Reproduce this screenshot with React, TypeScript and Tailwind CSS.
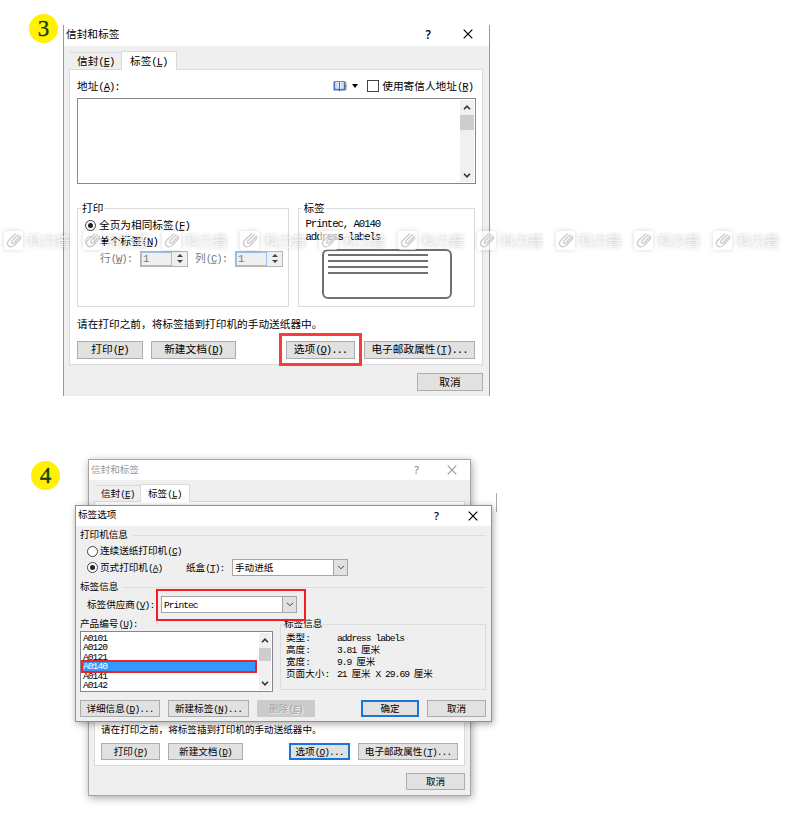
import React from 'react';
import clsx from 'clsx';

// Splits a label into CJK and Latin runs, "&X" marks the access key
const Label: React.FC<{ text: string; className?: string }> = ({ text, className }) => {
  const runs = text.match(/&.|[\x20-\x25\x27-\x7e]+|[^\x20-\x7e]+/g) ?? [];
  return (
    <span className={clsx('translate-y-[0.8px] whitespace-pre leading-none', className)}>
      {runs.map((run, i) => {
        if (run[0] === '&') {
          return (
            <span key={i} className="tracking-[-0.1em] underline underline-offset-1">
              {run.slice(1)}
            </span>
          );
        }
        const latin = /^[\x20-\x7e]/.test(run);
        return (
          <span key={i} className={latin ? 'tracking-[-0.1em]' : undefined}>
            {run}
          </span>
        );
      })}
    </span>
  );
};

const CloseIcon = () => (
  <svg className="h-[10px] w-[10px]" viewBox="0 0 10 10" stroke="currentColor" strokeWidth="1.2" fill="none">
    <path d="M0.7 0.7 9.3 9.3M9.3 0.7 0.7 9.3" />
  </svg>
);

const Chevron: React.FC<{ up?: boolean; className?: string }> = ({ up, className }) => (
  <svg className={clsx('h-[5px] w-[8px]', className)} viewBox="0 0 8 5" stroke="currentColor" fill="none">
    <path d={up ? 'M1 4.2 4 1.2 7 4.2' : 'M1 0.8 4 3.8 7 0.8'} />
  </svg>
);

const BookIcon = () => (
  <svg className="h-[12px] w-[14px]" viewBox="0 0 14 12">
    <path d="M0.5 1.5v9h4.8l1.2.8 1.2-.8h4.8v-9z" fill="#3f73c4" />
    <path d="M1.8 1.5h3.6l1.1.7v7.8l-1.1-.8H1.8zM11.2 1.5H7.6l-1.1.7v7.8l1.1-.8h3.6z" fill="#eaf3ff" stroke="#2f5fae" strokeWidth="0.7" />
    <path d="M3 3.5h2M3 5.2h2M3 7h2M8 3.5h2M8 5.2h2M8 7h2" stroke="#9cb9e6" strokeWidth="0.7" />
    <path d="M12.2 2h1.3v2.500h-1.300z" fill="#e8a33a" />
    <path d="M12.2 4.7h1.3v2.300h-1.300z" fill="#c8453a" />
    <path d="M12.2 7.2h1.3v2.500h-1.300z" fill="#4f9a54" />
  </svg>
);

const Radio: React.FC<{ checked?: boolean }> = ({ checked }) => (
  <span className="flex h-[11px] w-[11px] shrink-0 items-center justify-center rounded-full border border-[#444] bg-white">
    {checked && <span className="h-[5px] w-[5px] rounded-full bg-[#222]" />}
  </span>
);

const Button: React.FC<{ text: string; className?: string; primary?: boolean; disabled?: boolean }> = ({
  text,
  className,
  primary,
  disabled,
}) => (
  <button
    className={clsx(
      'flex shrink-0 items-center justify-center',
      primary
        ? 'border-2 border-[#1b75d8] bg-[#e1e1e1]'
        : disabled
          ? 'bg-[#cbcbcb] text-[#a2a2a2] [text-shadow:1px_1px_0_#f4f4f4]'
          : 'border border-[#adadad] bg-[#e1e1e1]',
      className,
    )}
  >
    <Label text={text} />
  </button>
);

const Spinner = () => (
  <span className="flex h-[16px] w-[48px] border border-[#b4b4b4]">
    <span className="flex w-[31px] items-center border border-[#9cc3ea] bg-[#efefef] pl-px">
      <Label text="1" />
    </span>
    <span className="flex flex-1 flex-col items-center justify-center gap-[3px] bg-[#efefef]">
      <span className="border-x-[3px] border-b-[3px] border-x-transparent border-b-[#444]" />
      <span className="border-x-[3px] border-t-[3px] border-x-transparent border-t-[#444]" />
    </span>
  </span>
);

const Select: React.FC<{ value: string; className?: string }> = ({ value, className }) => (
  <span className={clsx('flex h-[17px] border border-[#a5a5a5] bg-white', className)}>
    <span className="flex flex-1 items-center pl-[2px]">
      <Label text={value} />
    </span>
    <span className="flex w-[14px] items-center justify-center border-l border-[#a5a5a5] bg-[#e1e1e1] text-[#444]">
      <Chevron />
    </span>
  </span>
);

const Scrollbar: React.FC<{ className?: string; thumb: string }> = ({ className, thumb }) => (
  <div className={clsx('flex flex-col items-center bg-[#f0f0f0] text-[#333]', className)}>
    <span className="flex h-[15px] items-center">
      <Chevron up className="[stroke-width:1.6]" />
    </span>
    <span className={clsx('w-full bg-[#cdcdcd]', thumb)} />
    <span className="mt-auto flex h-[14px] items-center">
      <Chevron className="[stroke-width:1.6]" />
    </span>
  </div>
);

const SectionTitle: React.FC<{ text: string }> = ({ text }) => (
  <div className="flex h-[12px] items-center gap-[5px]">
    <Label text={text} />
    <span className="h-px flex-1 bg-[#dcdcdc]" />
  </div>
);

const StepBadge: React.FC<{ value: number; className: string }> = ({ value, className }) => (
  <div
    className={clsx(
      'absolute flex h-[29px] w-[29px] items-center justify-center rounded-full bg-[#fff100] font-["Liberation_Serif",serif] text-[23px] leading-none text-[#143d14] [-webkit-text-stroke:0.3px_#143d14]',
      className,
    )}
  >
    {value}
  </div>
);

const EnvelopesDialog = () => (
  <div className="absolute left-[63px] top-[25px] h-[371px] w-[427px] border-x border-[#e87474] bg-[#efefef] text-[10.68px]">
    <div className="flex h-[21px] items-center bg-white pl-[2px] pr-[16px]">
      <Label text="信封和标签" className="flex-1 pb-[2px]" />
      <span className="mr-[32px] pb-px font-['Open_Sans',sans-serif] text-[12px] font-semibold leading-none">?</span>
      <span className="pb-[3px]">
        <CloseIcon />
      </span>
    </div>
    <div className="flex h-[23px] items-end pl-[6px]">
      <div className="flex h-[17px] w-[51px] items-center border-t border-[#dadada] pl-[7px] pt-px">
        <Label text="信封(&E)" />
      </div>
      <div className="z-10 -mb-px flex h-[19px] w-[56px] items-center border border-b-0 border-[#dadada] bg-white pl-[8px]">
        <Label text="标签(&L)" />
      </div>
    </div>
    <div className="ml-[5px] h-[296px] w-[414px] border border-[#dadada] bg-white px-[7px]">
      <div className="flex h-[28px] items-center pr-[2px] pt-[4px]">
        <Label text="地址(&A):" className="flex-1" />
        <BookIcon />
        <span className="ml-[5px] mr-[9px] border-x-[3.5px] border-t-4 border-x-transparent border-t-black" />
        <span className="mr-[3px] h-[12px] w-[12px] border border-[#444] bg-white" />
        <Label text="使用寄信人地址(&R)" />
      </div>
      <div className="flex h-[86px] w-[399px] justify-end border border-[#858590] bg-white p-px">
        <Scrollbar className="w-[14px]" thumb="h-[15px]" />
      </div>
      <div className="mt-[18px] flex gap-[9px]">
        <fieldset className="h-[105px] w-[213px] border border-[#dcdcdc] pl-[7px]">
          <legend className="ml-[-4px] flex h-[12px] items-center px-px">
            <Label text="打印" />
          </legend>
          <div className="mt-[5px] flex h-[12px] items-center gap-[3px]">
            <Radio checked />
            <Label text="全页为相同标签(&F)" />
          </div>
          <div className="mt-[4px] flex h-[12px] items-center gap-[3px]">
            <Radio />
            <Label text="单个标签(&N)" />
          </div>
          <div className="mt-[3px] flex h-[17px] items-center pl-[15px] text-[#777]">
            <Label text="行(&W):" className="w-[40px]" />
            <Spinner />
            <Label text="列(&C):" className="ml-[7px] w-[40px]" />
            <Spinner />
          </div>
        </fieldset>
        <fieldset className="h-[105px] w-[177px] border border-[#dcdcdc] pl-[6px]">
          <legend className="ml-[-3px] flex h-[12px] items-center px-px">
            <Label text="标签" />
          </legend>
          <div className="mt-[3px] flex h-[13px] items-center">
            <Label text="Printec, A0140" />
          </div>
          <div className="flex h-[13px] items-center">
            <Label text="address labels" />
          </div>
          <div className="ml-[17px] mt-[6px] flex h-[50px] w-[130px] flex-col gap-[4px] rounded-[6px] border-2 border-[#707070] pl-[4px] pt-[3px]">
            <span className="h-[2px] w-[100px] bg-[#707070]" />
            <span className="h-[2px] w-[100px] bg-[#707070]" />
            <span className="h-[2px] w-[100px] bg-[#707070]" />
            <span className="h-[2px] w-[100px] bg-[#707070]" />
          </div>
        </fieldset>
      </div>
      <div className="mt-[11px] flex h-[12px] items-center">
        <Label text="请在打印之前，将标签插到打印机的手动送纸器中。" />
      </div>
      <div className="mt-[3px] flex h-[33px] items-center">
        <Button text="打印(&P)" className="h-[18px] w-[66px]" />
        <Button text="新建文档(&D)" className="ml-[8px] h-[18px] w-[85px]" />
        <div className="ml-[43px] flex h-[33px] w-[83px] items-center justify-center border-[3px] border-[#f83c3c]">
          <Button text="选项(&O)..." className="h-[18px] w-[69px]" />
        </div>
        <Button text="电子邮政属性(&T)..." className="ml-[2px] h-[18px] w-[111px]" />
      </div>
    </div>
    <Button text="取消" className="ml-[353px] mt-[8px] h-[18px] w-[66px]" />
  </div>
);

const InactiveDialog = () => (
  <div className="absolute left-[88px] top-[459px] flex h-[337px] w-[383px] flex-col border border-[#a5a5a5] bg-[#efefef] text-[9.6px] shadow-[1px_2px_8px_rgba(0,0,0,0.35)]">
    <div className="flex h-[20px] shrink-0 items-center bg-white pl-[2px] pr-[13px] text-[#999]">
      <Label text="信封和标签" className="flex-1" />
      <span className="mr-[28px] pb-px font-['Open_Sans',sans-serif] text-[11px] font-semibold leading-none">?</span>
      <CloseIcon />
    </div>
    <div className="flex h-[21px] shrink-0 items-end pl-[6px]">
      <div className="flex h-[16px] w-[45px] items-center border-t border-[#dadada] pl-[6px] pt-px">
        <Label text="信封(&E)" />
      </div>
      <div className="z-10 -mb-px flex h-[18px] w-[50px] items-center border border-b-0 border-[#dadada] bg-white pl-[7px]">
        <Label text="标签(&L)" />
      </div>
    </div>
    <div className="ml-[5px] flex h-[265px] w-[371px] shrink-0 flex-col justify-end border border-[#dadada] bg-white pb-[5px] pl-[6px]">
      <Label text="请在打印之前，将标签插到打印机的手动送纸器中。" className="mb-[8px]" />
      <div className="flex">
        <Button text="打印(&P)" className="h-[17px] w-[59px]" />
        <Button text="新建文档(&D)" className="ml-[8px] h-[17px] w-[75px]" />
        <Button text="选项(&O)..." primary className="ml-[46px] h-[17px] w-[61px]" />
        <Button text="电子邮政属性(&T)..." className="ml-[8px] h-[17px] w-[100px]" />
      </div>
    </div>
    <Button text="取消" className="ml-[317px] mt-[7px] h-[17px] w-[59px]" />
  </div>
);

const products = ['A0101', 'A0120', 'A0121', 'A0140', 'A0141', 'A0142'];

const details = [
  { name: '类型:', value: 'address labels' },
  { name: '高度:', value: '3.81 厘米' },
  { name: '宽度:', value: '9.9 厘米' },
  { name: '页面大小:', value: '21 厘米 X 29.69 厘米' },
];

const LabelOptionsDialog = () => (
  <div className="absolute left-[75px] top-[505px] h-[217px] w-[417px] border border-[#e07070] bg-[#efefef] text-[9.6px] shadow-[1px_2px_7px_rgba(0,0,0,0.35)]">
    <div className="flex h-[20px] items-center bg-white pl-[2px] pr-[13px]">
      <Label text="标签选项" className="flex-1 pb-[2px]" />
      <span className="mr-[29px] pb-[2px] font-['Open_Sans',sans-serif] text-[11px] font-semibold leading-none">?</span>
      <span className="pb-px">
        <CloseIcon />
      </span>
    </div>
    <div className="pl-[4px] pr-[5px] pt-[3px]">
      <SectionTitle text="打印机信息" />
      <div className="mt-[4px] flex h-[12px] items-center gap-[2px] pl-[7px]">
        <Radio />
        <Label text="连续送纸打印机(&C)" />
      </div>
      <div className="mt-[2px] flex h-[17px] items-center pl-[7px]">
        <Radio checked />
        <Label text="页式打印机(&A)" className="ml-[2px] w-[86px]" />
        <Label text="纸盒(&T):" className="w-[46px]" />
        <Select value="手动进纸" className="w-[116px]" />
      </div>
      <div className="mt-[5px]">
        <SectionTitle text="标签信息" />
      </div>
      <div className="-mt-[4px] flex h-[31px] items-center pl-[7px]">
        <Label text="标签供应商(&V):" className="w-[69px]" />
        <div className="z-10 flex h-[32px] w-[150px] items-center border-[2px] border-[#f51d1d] pl-[3px]">
          <Select value="Printec" className="w-[136px]" />
        </div>
      </div>
      <div className="-mt-[2px] flex">
        <div className="w-[200px]">
          <div className="flex h-[12px] items-center">
            <Label text="产品编号(&U):" />
          </div>
          <div className="mt-px flex h-[61px] w-[193px] border border-[#858590] bg-white py-px">
            <ul className="flex-1">
              {products.map((name) => (
                <li
                  key={name}
                  className={clsx(
                    'flex items-center',
                    name === 'A0140'
                      ? 'relative -my-[2px] h-[13.5px] border-2 border-[#e8262a] bg-[#3399ff] text-white'
                      : 'h-[9.5px] pl-[2px]',
                  )}
                >
                  <Label text={name} />
                </li>
              ))}
            </ul>
            <Scrollbar className="ml-[2px] mr-px w-[12px]" thumb="h-[13px]" />
          </div>
        </div>
        <fieldset className="h-[72px] w-[206px] border border-[#dcdcdc] pl-[5px]">
          <legend className="-ml-[2px] flex h-[12px] items-center">
            <Label text="标签信息" />
          </legend>
          <div className="mt-[2px]">
            {details.map((row) => (
              <div key={row.name} className="flex h-[12px] items-center">
                <Label text={row.name} className="w-[51px]" />
                <Label text={row.value} />
              </div>
            ))}
          </div>
        </fieldset>
      </div>
      <div className="mt-[8px] flex">
        <Button text="详细信息(&D)..." className="h-[17px] w-[80px]" />
        <Button text="新建标签(&N)..." className="ml-[8px] h-[17px] w-[81px]" />
        <Button text="删除(&E)" disabled className="ml-[8px] h-[17px] w-[58px]" />
        <Button text="确定" primary className="ml-[46px] h-[17px] w-[58px]" />
        <Button text="取消" className="ml-[8px] h-[17px] w-[59px]" />
      </div>
    </div>
  </div>
);

const Watermark = () => (
  <div className="pointer-events-none absolute left-[4px] top-[231px] z-20 flex">
    {Array.from({ length: 10 }, (_, i) => (
      <div key={i} className="flex w-[78.8px] shrink-0 items-center">
        <span className="flex h-[19px] w-[19px] shrink-0 items-center justify-center rounded-[3px] bg-white/65 shadow-[0_0_5px_rgba(0,0,0,0.16)]">
          <svg className="h-[19px] w-[19px]" viewBox="0 0 19 19" fill="none" stroke="#cbcbcb" strokeWidth="1.3" strokeLinecap="round">
            <path d="M11.5 3 5 9C1.5 12.5 4.5 17 8.5 15.5 9.5 15 10.3 14.2 11 13.5L17 7M14.3 3.8 8 9.8C6.5 11.8 8.5 13.2 10 11.8L16.5 5" />
          </svg>
        </span>
        <span className="ml-[5px] translate-y-px whitespace-nowrap text-[14px] leading-none text-white/75 [text-shadow:0_0_4px_rgba(0,0,0,0.3)]">
          科力普
        </span>
      </div>
    ))}
  </div>
);

export default function App() {
  return (
    <main className="relative h-[816px] w-[790px] overflow-hidden bg-white font-['Liberation_Mono','Noto_Sans_CJK_SC',monospace] text-black">
      <StepBadge value={3} className="left-[29px] top-[14px]" />
      <EnvelopesDialog />
      <StepBadge value={4} className="left-[31px] top-[461px]" />
      <InactiveDialog />
      <span className="absolute left-[496px] top-[493px] h-[19px] w-px bg-[#aaa]" />
      <LabelOptionsDialog />
      <Watermark />
    </main>
  );
}
